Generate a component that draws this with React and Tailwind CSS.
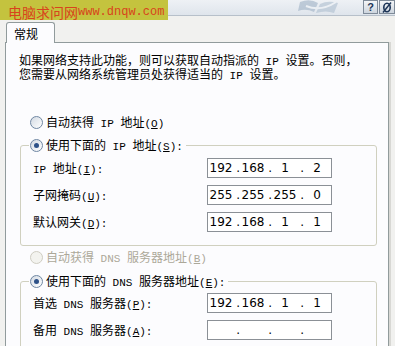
import React from "react";

const ui = "font-['Noto_Sans_CJK_SC','Noto_Sans',sans-serif]";
const mono = "font-['Liberation_Mono',monospace] text-[11px] leading-none whitespace-pre";

// ascii runs get a half-width mono face, like SimSun's latin glyphs
function T({ s }) {
  const parts = s.split(/([\x20-\x7E]+)/).filter(Boolean);
  return (
    <>
      {parts.map((p, i) => {
        if (!/^[\x20-\x7E]+$/.test(p)) return <span key={i}>{p}</span>;
        const bits = p.split(/&(.)/);
        return (
          <span key={i} className={mono}>
            {bits.map((b, j) =>
              j % 2 ? (
                <span key={j} className="underline underline-offset-1">{b}</span>
              ) : (
                b
              )
            )}
          </span>
        );
      })}
    </>
  );
}

function Radio({ checked, disabled }) {
  return (
    <span
      className={
        "flex items-center justify-center w-[13px] h-[13px] rounded-full border shrink-0 " +
        (disabled
          ? "border-[#cfcdc2] bg-[#f3f3ef]"
          : "border-[#6f87a3] bg-gradient-to-br from-[#d3dae3] to-[#ffffff]")
      }
    >
      {checked && <span className="w-[5px] h-[5px] rounded-full bg-[#2d5188]" />}
    </span>
  );
}

function IpBox({ parts }) {
  return (
    <div className="flex items-center w-[125px] h-[20px] border border-[#8b9096] bg-white font-['DejaVu_Sans',sans-serif] text-[12px] text-black">
      {parts.map((p, i) => (
        <React.Fragment key={i}>
          <span className="w-[26px] text-center">{p}</span>
          {i < 3 && <span className="w-[6px] text-right">.</span>}
        </React.Fragment>
      ))}
    </div>
  );
}

function Row({ label, parts }) {
  return (
    <div className="flex items-center h-[20px] pl-[12px]">
      <div className="w-[174px] h-[14px]">
        <T s={label} />
      </div>
      <IpBox parts={parts} />
    </div>
  );
}

export default function App() {
  return (
    <div className={"relative w-[395px] h-[346px] overflow-hidden bg-[#f1f1ef] text-[12px] leading-[14px] text-black " + ui}>
      {/* title strip */}
      <div className="flex items-start justify-end h-[16px] bg-gradient-to-b from-[#eef1f5] to-[#dfe5ec] border-b border-[#b7c0ca]">
        <svg width="50" height="15" viewBox="0 0 50 15" className="mr-[17px] opacity-60">
          <path d="M4 2 Q14 -2 22 3 L18 12 Q10 8 2 11 Z" fill="#9fb2c6" />
          <path d="M24 4 Q32 0 42 3 L38 13 Q30 10 20 13 Z" fill="#aebfd0" />
          <path d="M10 6 Q25 12 40 2" stroke="#eef2f6" strokeWidth="2" fill="none" />
        </svg>
        <div className="flex gap-[1px] h-[14px]">
          <div className="flex items-center justify-center w-[15px] h-[14px] border border-[#7f8b99] bg-gradient-to-b from-[#f4f6f8] to-[#cdd5de] text-[11px] font-bold leading-none text-[#1d3557] font-['Liberation_Sans',sans-serif]">
            ?
          </div>
          <div className="flex items-center justify-center w-[16px] h-[14px] border border-[#7f8b99] bg-gradient-to-b from-[#f4f6f8] to-[#cdd5de]">
            <svg width="10" height="11" viewBox="0 0 10 11">
              <ellipse cx="5" cy="5.5" rx="3.2" ry="4.2" stroke="#1d3557" strokeWidth="1.6" fill="none" />
              <path d="M1 10.5 L9 0.5" stroke="#1d3557" strokeWidth="1.4" />
            </svg>
          </div>
        </div>
      </div>

      {/* watermark */}
      <div className="absolute top-0 left-0 flex items-center w-[168px] h-[20px] pl-[8px] pt-[3px] bg-[#c4c33e]">
        <span className="text-[14px] leading-[16px] text-[#d8431c]">电脑求问网</span>
        <span className="text-[12px] leading-[16px] text-[#d8431c] font-['Liberation_Mono',monospace]">www.dnqw.com</span>
      </div>

      {/* tab */}
      <div className="pt-[6px] pl-[6px]">
        <div className="relative z-10 -mb-px w-[49px] h-[21px] border border-b-0 border-[#919b9c] rounded-t-[3px] bg-[#fcfcfe] pl-[7px] pt-[4px]">
          常规
        </div>
      </div>

      {/* panel */}
      <div className="ml-[5px] w-[384px] h-[320px] border border-[#919b9c] bg-[#fcfcfe] pt-[10px] shadow-[2px_0_0_#d8d8d4]">
        <div className="ml-[13px]">
          <div className="h-[14px]">
            <T s="如果网络支持此功能，则可以获取自动指派的 IP 设置。否则，" />
          </div>
          <div className="h-[14px]">
            <T s="您需要从网络系统管理员处获得适当的 IP 设置。" />
          </div>
        </div>

        <div className="flex items-center gap-[3px] h-[14px] ml-[24px] mt-[34px]">
          <Radio />
          <span>
            <T s="自动获得 IP 地址(&O)" />
          </span>
        </div>

        <fieldset className="ml-[14px] mt-[9px] w-[357px] border border-[#d0d0bf] rounded-[3px] pb-[13px]">
          <legend className="ml-[8px] pr-[3px] pl-[1px]">
            <span className="flex items-center gap-[3px] h-[14px]">
              <Radio checked />
              <span>
                <T s="使用下面的 IP 地址(&S):" />
              </span>
            </span>
          </legend>
          <div className="flex flex-col gap-[7px] mt-[6px]">
            <Row label="IP 地址(&I):" parts={["192", "168", "1", "2"]} />
            <Row label="子网掩码(&U):" parts={["255", "255", "255", "0"]} />
            <Row label="默认网关(&D):" parts={["192", "168", "1", "1"]} />
          </div>
        </fieldset>

        <div className="flex items-center gap-[3px] h-[14px] ml-[24px] mt-[4px] text-[#aca899]">
          <Radio disabled />
          <span>
            <T s="自动获得 DNS 服务器地址(&B)" />
          </span>
        </div>

        <fieldset className="ml-[14px] mt-[10px] w-[357px] border border-[#d0d0bf] rounded-[3px] pb-[13px]">
          <legend className="ml-[8px] pr-[3px] pl-[1px]">
            <span className="flex items-center gap-[3px] h-[14px]">
              <Radio checked />
              <span>
                <T s="使用下面的 DNS 服务器地址(&E):" />
              </span>
            </span>
          </legend>
          <div className="flex flex-col gap-[7px] mt-[5px]">
            <Row label="首选 DNS 服务器(&P):" parts={["192", "168", "1", "1"]} />
            <Row label="备用 DNS 服务器(&A):" parts={["", "", "", ""]} />
          </div>
        </fieldset>
      </div>
    </div>
  );
}
